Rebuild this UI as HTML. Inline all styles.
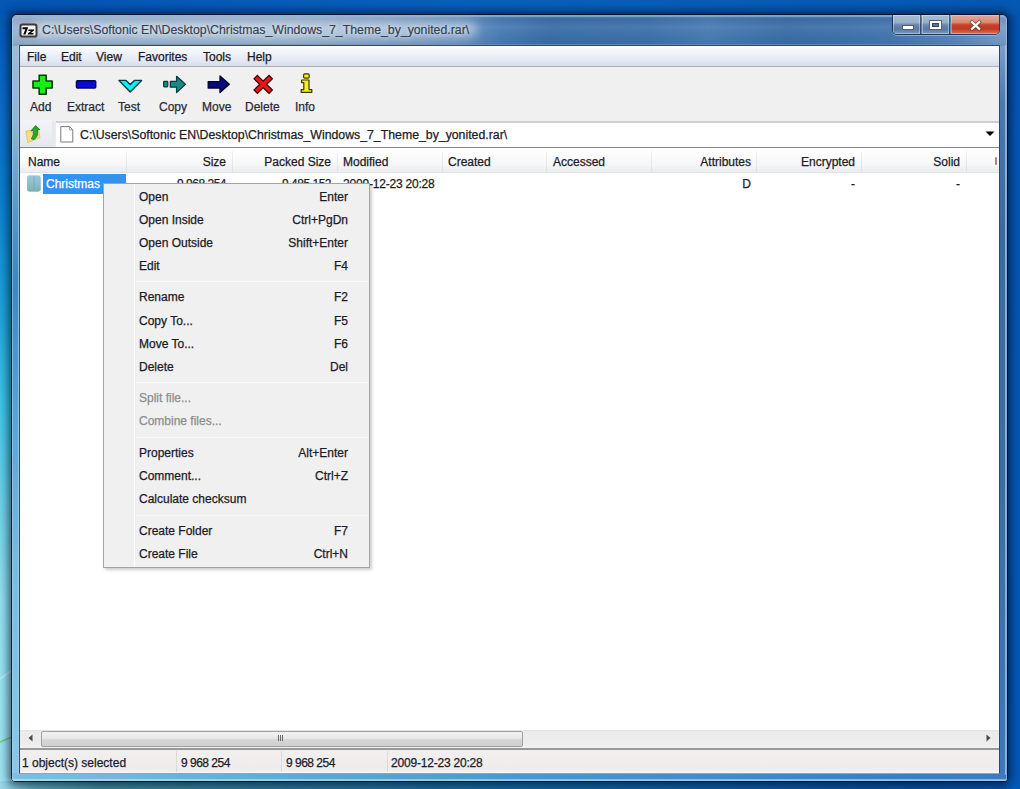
<!DOCTYPE html>
<html><head><meta charset="utf-8">
<style>
*{margin:0;padding:0;box-sizing:border-box}
html,body{width:1020px;height:789px;overflow:hidden}
body{position:relative;font-family:"Liberation Sans",sans-serif;font-size:12px;color:#1e1e1e;
background:linear-gradient(180deg,#0b4aa6 0%,#0d52ae 30%,#1266b8 55%,#1b6fb8 100%)}
.a{position:absolute}
.t{position:absolute;white-space:pre;line-height:14px;font-size:12px;color:#1b1b28;-webkit-text-stroke:0.25px currentColor}
#desk-left{left:0;top:0;width:12px;height:789px;background:linear-gradient(180deg,#0455b4 0%,#0a6ac8 12%,#0a80d0 25%,#20a4dc 40%,#3ec4e8 51%,#70d4ea 65%,#90e0ec 76%,#98e4f0 89%,#a0e2f0 100%)}
#desk-bot{left:0;top:781px;width:1020px;height:8px;background:linear-gradient(90deg,#9ad8e8 0%,#5aa8b8 3%,#3a8898 10%,#2a7898 25%,#1068a0 50%,#0a5ca4 70%,#0450a0 90%,#0452a8 100%)}
#desk-right{left:1007px;top:0;width:13px;height:789px;background:linear-gradient(180deg,#0455b4 0%,#0458b4 50%,#0458b8 100%)}
#desk-top{left:0;top:0;width:1020px;height:14px;background:linear-gradient(90deg,#0455b4 0%,#0860bc 50%,#0458b4 100%)}
#win{left:11px;top:14px;width:997px;height:768px;border-radius:6px 6px 4px 4px;border:1px solid rgba(2,12,30,.9);overflow:hidden;
box-shadow:0 0 9px 3px rgba(0,10,30,.6)}
#win .p{position:absolute}
#client{left:19px;top:45px;width:981px;height:729px;background:#f0f0f0;border:1px solid #3a4656;border-bottom-color:#8aa8c0}
/* menubar */
#menubar{left:20px;top:46px;width:979px;height:21px;background:linear-gradient(180deg,#fdfdfe 0%,#f0f3f9 35%,#e2e7f1 75%,#d6dde9 100%);border-bottom:1px solid #aab0ba;box-shadow:0 1px 0 #d8dbe0}
/* toolbar */
#toolbar{left:20px;top:67px;width:979px;height:54px;background:#f0f0f0}
.lbl{position:absolute;white-space:pre;line-height:14px;font-size:12px;color:#2a2a35;top:100px;-webkit-text-stroke:0.25px currentColor}
/* address */
#upbtn{left:20px;top:120px;width:32px;height:27px;background:linear-gradient(180deg,#f3f4f8,#e4e7ef)}
#upsep{left:52px;top:121px;width:4px;height:26px;background:linear-gradient(90deg,#e6e7ea,#ececee)}
#addr{left:56px;top:121px;width:943px;height:26px;background:#fff;border-top:2px solid #cfd0d4}
#addrline{left:20px;top:147px;width:979px;height:1px;background:#84868c}
/* header */
#header{left:20px;top:148px;width:979px;height:25px;background:linear-gradient(180deg,#ffffff 0%,#fcfcfd 35%,#f5f6f7 70%,#ebecee 100%);border-bottom:1px solid #e2e3e5}
.sep{position:absolute;top:151px;width:1px;height:21px;background:linear-gradient(180deg,#f2f2f4,#dfe0e2)}
#list{left:20px;top:173px;width:979px;height:557px;background:#fff}
/* scrollbar */
#hscroll{left:20px;top:730px;width:979px;height:18px;background:linear-gradient(180deg,#e2e2e2 0,#ebebeb 2px,#ededed 80%,#f2f3f4 100%)}
#thumb{left:41px;top:731px;width:482px;height:16px;border:1px solid #a0a0a0;border-radius:2px;background:linear-gradient(180deg,#f2f2f2 0%,#e8e8e8 45%,#d6d6d6 55%,#cfcfcf 100%)}
#sline{left:20px;top:748px;width:979px;height:2px;background:#98989a}
#status{left:20px;top:750px;width:979px;height:23px;background:linear-gradient(180deg,#f2f0ee 0%,#efeceb 85%,#f6f6f6 100%)}
.ssep{position:absolute;top:751px;width:1px;height:21px;background:#dcdad8}
/* menu */
#menu{left:103px;top:183px;width:267px;height:385px;background:#f0f0f0;border:1px solid #a4a4a4;box-shadow:2px 2px 3px rgba(0,0,0,.2)}
#mgut{left:134px;top:184px;width:1px;height:383px;background:#e2e3e3;border-right:1px solid #fff}
.mt{position:absolute;white-space:pre;line-height:14px;font-size:12px;color:#1b1b28;-webkit-text-stroke:0.25px currentColor}
.ms{position:absolute;left:136px;width:233px;height:1px;background:#e6e6e6;border-bottom:1px solid #f8f8f8}
.dis{color:#8d8d8d}
</style></head><body>
<div id="desk-left" class="a"></div>
<div id="desk-bot" class="a"></div>
<div id="desk-right" class="a"></div>
<div id="desk-top" class="a"></div>
<svg class="a" style="left:0;top:650px" width="12" height="100"><path d="M0 92 L12 87" stroke="#6cc060" stroke-width="1.4" fill="none" opacity=".85"/><path d="M0 29 L12 20" stroke="#d8f6f8" stroke-width="1.6" fill="none" opacity=".6"/></svg>
<div id="win" class="a">
 <div class="p" style="left:0;top:0;width:995px;height:31px;background:linear-gradient(90deg,#9cb2cc 0%,#9ab2cc 28%,#86a4c6 38%,#6e94c0 45%,#4a7cb4 49%,#3a6ea6 54%,#3e72aa 64%,#4a7cb2 70%,#3a6ea6 78%,#4476ae 88%,#5a88bc 95%,#7a9ec8 100%)"></div>
 <div class="p" style="left:0;top:0;width:995px;height:31px;background:linear-gradient(180deg,rgba(255,255,255,.15) 0,rgba(20,50,100,.08) 4px,rgba(255,255,255,.06) 12px,rgba(255,255,255,0) 20px,rgba(30,60,110,.12) 100%)"></div>
 <div class="p" style="left:0;top:31px;width:8px;height:735px;background:linear-gradient(180deg,#a0b8d4 0%,#98b4d2 10%,#5a98c8 22%,#3a88c0 32%,#5aa6d8 52%,#78bce4 72%,#8ac8ea 100%)"></div>
 <div class="p" style="left:987px;top:31px;width:8px;height:735px;background:linear-gradient(180deg,#7a9ec8 0%,#4a78b0 8%,#3a6aa4 25%,#3a6ea8 60%,#3a78c0 100%)"></div>
 <div class="p" style="left:0;top:758px;width:995px;height:8px;background:linear-gradient(90deg,#78c0e4 0%,#70b8e0 10%,#4a98d0 50%,#3a80c0 90%,#3a7cc0 100%)"></div>
 <div class="p" style="left:0;top:764px;width:995px;height:2px;background:linear-gradient(90deg,#a8dcf2,#90c0e8 50%,#88b0e0)"></div>
 <div class="p" style="left:0;top:0;width:995px;height:766px;border:1px solid rgba(175,205,235,.6);border-top:2px solid rgba(140,175,210,.7);border-radius:5px 5px 1px 1px"></div>
 <div class="p" style="left:6px;top:29px;width:983px;height:1px;background:rgba(110,150,195,.7)"></div>
 <div class="p" style="left:6px;top:30px;width:1px;height:730px;background:rgba(170,205,235,.7)"></div>
 <div class="p" style="left:993px;top:30px;width:1px;height:730px;background:rgba(160,195,235,.8)"></div>
</div>
<div id="client" class="a"></div>


<div class="a" style="left:32px;top:21px;width:446px;height:17px;border-radius:9px;background:rgba(225,235,246,.42);filter:blur(4px)"></div>
<svg class="a" style="left:19px;top:23px" width="19" height="15" viewBox="0 0 19 15"><rect x="1.5" y="1.5" width="16" height="12" rx="1.8" fill="#f4f4f4" stroke="#3a3a3a" stroke-width="2"/><path d="M3.6 4.2 H9.2 L6.4 11.6 H4.2 L6.4 6.2 H3.4 Z" fill="#000"/><path d="M9.6 6.4 H15.4 L15 7.6 L11.8 10 H14.6 L14.2 11.6 H8.6 L9 10.2 L12.2 7.9 H9.2 Z" fill="#000"/></svg>
<div class="t" style="left:42px;top:23px;font-size:12.3px;color:#34404e;-webkit-text-stroke:0.15px currentColor;text-shadow:0 0 5px rgba(255,255,255,.9)">C:\Users\Softonic EN\Desktop\Christmas_Windows_7_Theme_by_yonited.rar\</div>
<!-- caption buttons -->
<div class="a" style="left:892px;top:15px;width:108px;height:20px;border:1px solid rgba(20,30,60,.75);border-top:none;border-radius:0 0 5px 5px;overflow:hidden;box-shadow:0 1px 0 rgba(200,220,240,.5)">
  <div class="a" style="left:0;top:0;width:28px;height:19px;background:linear-gradient(180deg,#a8bcd4 0%,#98aec8 40%,#6a86ae 52%,#5a7aa4 75%,#7a9ac2 100%);border-right:1px solid rgba(20,30,60,.6);box-shadow:inset 0 0 0 1px rgba(255,255,255,.35)"></div>
  <div class="a" style="left:29px;top:0;width:28px;height:19px;background:linear-gradient(180deg,#a8bcd4 0%,#98aec8 40%,#6a86ae 52%,#5a7aa4 75%,#7a9ac2 100%);border-right:1px solid rgba(20,30,60,.6);box-shadow:inset 0 0 0 1px rgba(255,255,255,.35)"></div>
  <div class="a" style="left:58px;top:0;width:49px;height:19px;background:linear-gradient(180deg,#e2a898 0%,#d88c78 38%,#c4432a 52%,#c23a22 72%,#d8735a 100%);box-shadow:inset 0 0 0 1px rgba(255,220,210,.4)"></div>
</div>
<div class="a" style="left:902px;top:25px;width:12px;height:5px;background:#fff;border:1px solid rgba(40,55,85,.8);border-radius:1px"></div>
<div class="a" style="left:929px;top:20px;width:13px;height:10px;border:1px solid rgba(40,55,85,.8);border-radius:1px;background:#fff"></div>
<div class="a" style="left:932px;top:23px;width:7px;height:4px;background:#56729a;border:1px solid rgba(40,55,85,.8)"></div>
<svg class="a" style="left:965px;top:18px" width="20" height="14" viewBox="0 0 20 14"><path d="M7 4.2 L14.2 10.8 M14.2 4.2 L7 10.8" stroke="rgba(90,30,20,.7)" stroke-width="3.8" fill="none" stroke-linecap="square"/><path d="M7 4.2 L14.2 10.8 M14.2 4.2 L7 10.8" stroke="#fff" stroke-width="2.3" fill="none" stroke-linecap="square"/></svg>
<div id="menubar" class="a"></div>
<div class="t" style="left:27px;top:50px">File</div>
<div class="t" style="left:61px;top:50px">Edit</div>
<div class="t" style="left:96px;top:50px">View</div>
<div class="t" style="left:138px;top:50px">Favorites</div>
<div class="t" style="left:203px;top:50px">Tools</div>
<div class="t" style="left:247px;top:50px">Help</div>

<div id="toolbar" class="a"></div>
<div class="lbl" style="left:30px">Add</div>
<div class="lbl" style="left:67px">Extract</div>
<div class="lbl" style="left:118px">Test</div>
<div class="lbl" style="left:159px">Copy</div>
<div class="lbl" style="left:202px">Move</div>
<div class="lbl" style="left:245px">Delete</div>
<div class="lbl" style="left:295px">Info</div>

<div id="upbtn" class="a"></div>
<div id="upsep" class="a"></div>
<div id="addr" class="a"></div>
<div id="addrline" class="a"></div>
<div class="t" style="left:80px;top:128px;font-size:12.3px">C:\Users\Softonic EN\Desktop\Christmas_Windows_7_Theme_by_yonited.rar\</div>

<div id="header" class="a"></div>
<div class="sep" style="left:126px"></div>
<div class="sep" style="left:232px"></div>
<div class="sep" style="left:337px"></div>
<div class="sep" style="left:442px"></div>
<div class="sep" style="left:546px"></div>
<div class="sep" style="left:651px"></div>
<div class="sep" style="left:756px"></div>
<div class="sep" style="left:861px"></div>
<div class="sep" style="left:966px"></div>
<div class="t" style="left:28px;top:155px">Name</div>
<div class="t" style="left:126px;top:155px;width:100px;text-align:right">Size</div>
<div class="t" style="left:200px;top:155px;width:131px;text-align:right">Packed Size</div>
<div class="t" style="left:343px;top:155px">Modified</div>
<div class="t" style="left:448px;top:155px">Created</div>
<div class="t" style="left:553px;top:155px">Accessed</div>
<div class="t" style="left:640px;top:155px;width:111px;text-align:right">Attributes</div>
<div class="t" style="left:740px;top:155px;width:115px;text-align:right">Encrypted</div>
<div class="t" style="left:860px;top:155px;width:100px;text-align:right">Solid</div>

<div id="list" class="a"></div>

<svg class="a" style="left:0;top:0" width="1020" height="200" viewBox="0 0 1020 200">
 <path d="M39.2 75.2 H46.2 V81 H52.2 V88 H46.2 V94.2 H39.2 V88 H33 V81 H39.2 Z" fill="#14f014" stroke="#0c3a0c" stroke-width="1.6" stroke-linejoin="round"/>
 <rect x="76.5" y="80.7" width="19.2" height="7.3" rx="1" fill="#0a0ad8" stroke="#06064a" stroke-width="1.5"/>
 <path d="M119 80.4 H126 L130.2 84.6 L134.4 80.4 H141.6 L130.2 92 Z" fill="#10eef4" stroke="#0a3a40" stroke-width="1.4" stroke-linejoin="round"/>
 <rect x="163.6" y="81.3" width="4.2" height="5.6" rx="0.8" fill="#178a86" stroke="#0a3a3a" stroke-width="1.2"/>
 <path d="M170.4 81.3 H176.6 V76.3 L185.4 84.2 L176.6 92.6 V87.2 H170.4 Z" fill="#178a86" stroke="#0a3a3a" stroke-width="1.3" stroke-linejoin="round"/>
 <path d="M208.2 81.6 H220 V76 L229.3 84.3 L220 92.5 V88 H208.2 Z" fill="#0a0a7c" stroke="#03032c" stroke-width="1.3" stroke-linejoin="round"/>
 <path d="M257.4 78.8 L269 90 M269 78.8 L257.4 90" stroke="#3a0606" stroke-width="6" stroke-linecap="square" fill="none"/>
 <path d="M257.4 78.8 L269 90 M269 78.8 L257.4 90" stroke="#ee1414" stroke-width="3.6" stroke-linecap="square" fill="none"/>
 <rect x="303.6" y="73.8" width="5.6" height="4.4" rx="1.2" fill="#f2f21a" stroke="#3a3a06" stroke-width="1.2"/>
 <path d="M301.6 80 H309 V89.6 H311.8 V92.4 H301.2 V89.6 H303.8 V82.6 H301.6 Z" fill="#f2f21a" stroke="#3a3a06" stroke-width="1.2" stroke-linejoin="round"/>
 <!-- up folder -->
 <path d="M25.8 131.5 L30.5 130.2 L31.6 132.6 L38.6 130.4 L40 137.5 L27.8 142.6 Z" fill="#f4d870" stroke="#e0b850" stroke-width="0.7"/>
 <path d="M27 133 L38.5 131.2 L39.6 137.2 L28.2 141.8 Z" fill="#f8e488" opacity=".8"/>
 <path d="M31.4 138.8 Q34.6 134 33.2 130.4 L31 130.8 L35.6 125.6 L39.8 129.6 L37.4 129.8 Q39 135.4 34.2 139.6 Z" fill="#28a828" stroke="#137a13" stroke-width="0.8" stroke-linejoin="round"/>
 <!-- doc icon -->
 <path d="M60.8 126.6 H69.6 L72.8 129.8 V142 H60.8 Z" fill="#fff" stroke="#7a7a7a" stroke-width="1"/>
 <path d="M69.6 126.6 V129.8 H72.8" fill="none" stroke="#9a9a9a" stroke-width="1"/>
 <!-- dropdown arrow -->
 <path d="M985.5 131.5 H994.5 L990 136 Z" fill="#000"/>
 <!-- folder in list -->
 <rect x="27.2" y="175.6" width="13.4" height="15.8" rx="1.8" fill="#90c2d2"/>
 <rect x="27.2" y="175.6" width="13.4" height="15.8" rx="1.8" fill="url(#fg)"/>
 <rect x="33.2" y="176.2" width="1.6" height="14.6" fill="#7aa8c0" opacity=".55"/>
 <defs><linearGradient id="fg" x1="0" y1="0" x2="0" y2="1"><stop offset="0" stop-color="#9ccbe0" stop-opacity=".6"/><stop offset="1" stop-color="#78aeb0" stop-opacity=".9"/></linearGradient></defs>
</svg>

<div class="a" style="left:43px;top:174px;width:83px;height:20px;background:#3192f2"></div>
<div class="t" style="left:46px;top:177px;color:#fff">Christmas</div>
<div class="t" style="left:126px;top:177px;width:100px;text-align:right;letter-spacing:-0.5px">9 968 254</div>
<div class="t" style="left:232px;top:177px;width:99px;text-align:right;letter-spacing:-0.5px">9 485 152</div>
<div class="t" style="left:343px;top:177px;letter-spacing:-0.2px">2009-12-23 20:28</div>
<div class="t" style="left:651px;top:177px;width:100px;text-align:right">D</div>
<div class="t" style="left:756px;top:177px;width:99px;text-align:right">-</div>
<div class="t" style="left:861px;top:177px;width:99px;text-align:right">-</div>

<div id="hscroll" class="a"></div>
<div id="thumb" class="a"></div>
<div id="sline" class="a"></div>
<div id="status" class="a"></div>
<svg class="a" style="left:0;top:725px" width="1020" height="25" viewBox="0 725 1020 25">
 <path d="M32.5 734.5 V741.5 L28.5 738 Z" fill="#4a4a4a"/>
 <path d="M986.5 734.5 V741.5 L990.5 738 Z" fill="#4a4a4a"/>
 <path d="M278.5 735 V741 M280.5 735 V741 M282.5 735 V741" stroke="#6a6a6a" stroke-width="1" fill="none"/>
</svg>
<div class="a" style="left:995px;top:157px;width:2px;height:8px;background:#9a5a60;border-radius:1px;opacity:.75"></div>

<div class="ssep" style="left:176px"></div>
<div class="ssep" style="left:281px"></div>
<div class="ssep" style="left:387px"></div>
<div class="t" style="left:22px;top:756px">1 object(s) selected</div>
<div class="t" style="left:181px;top:756px;letter-spacing:-0.5px">9 968 254</div>
<div class="t" style="left:286px;top:756px;letter-spacing:-0.5px">9 968 254</div>
<div class="t" style="left:391px;top:756px;letter-spacing:-0.2px">2009-12-23 20:28</div>

<div id="menu" class="a"></div>
<div id="mgut" class="a"></div>
<div class="mt" style="left:139px;top:190px">Open</div><div class="mt" style="left:240px;top:190px;width:108px;text-align:right">Enter</div>
<div class="mt" style="left:139px;top:213px">Open Inside</div><div class="mt" style="left:240px;top:213px;width:108px;text-align:right">Ctrl+PgDn</div>
<div class="mt" style="left:139px;top:236px">Open Outside</div><div class="mt" style="left:240px;top:236px;width:108px;text-align:right">Shift+Enter</div>
<div class="mt" style="left:139px;top:259px">Edit</div><div class="mt" style="left:240px;top:259px;width:108px;text-align:right">F4</div>
<div class="ms" style="top:281px"></div>
<div class="mt" style="left:139px;top:290px">Rename</div><div class="mt" style="left:240px;top:290px;width:108px;text-align:right">F2</div>
<div class="mt" style="left:139px;top:314px">Copy To...</div><div class="mt" style="left:240px;top:314px;width:108px;text-align:right">F5</div>
<div class="mt" style="left:139px;top:337px">Move To...</div><div class="mt" style="left:240px;top:337px;width:108px;text-align:right">F6</div>
<div class="mt" style="left:139px;top:360px">Delete</div><div class="mt" style="left:240px;top:360px;width:108px;text-align:right">Del</div>
<div class="ms" style="top:382px"></div>
<div class="mt dis" style="left:139px;top:391px">Split file...</div>
<div class="mt dis" style="left:139px;top:414px">Combine files...</div>
<div class="ms" style="top:437px"></div>
<div class="mt" style="left:139px;top:446px">Properties</div><div class="mt" style="left:240px;top:446px;width:108px;text-align:right">Alt+Enter</div>
<div class="mt" style="left:139px;top:469px">Comment...</div><div class="mt" style="left:240px;top:469px;width:108px;text-align:right">Ctrl+Z</div>
<div class="mt" style="left:139px;top:492px">Calculate checksum</div>
<div class="ms" style="top:515px"></div>
<div class="mt" style="left:139px;top:524px">Create Folder</div><div class="mt" style="left:240px;top:524px;width:108px;text-align:right">F7</div>
<div class="mt" style="left:139px;top:547px">Create File</div><div class="mt" style="left:240px;top:547px;width:108px;text-align:right">Ctrl+N</div>
</body></html>
